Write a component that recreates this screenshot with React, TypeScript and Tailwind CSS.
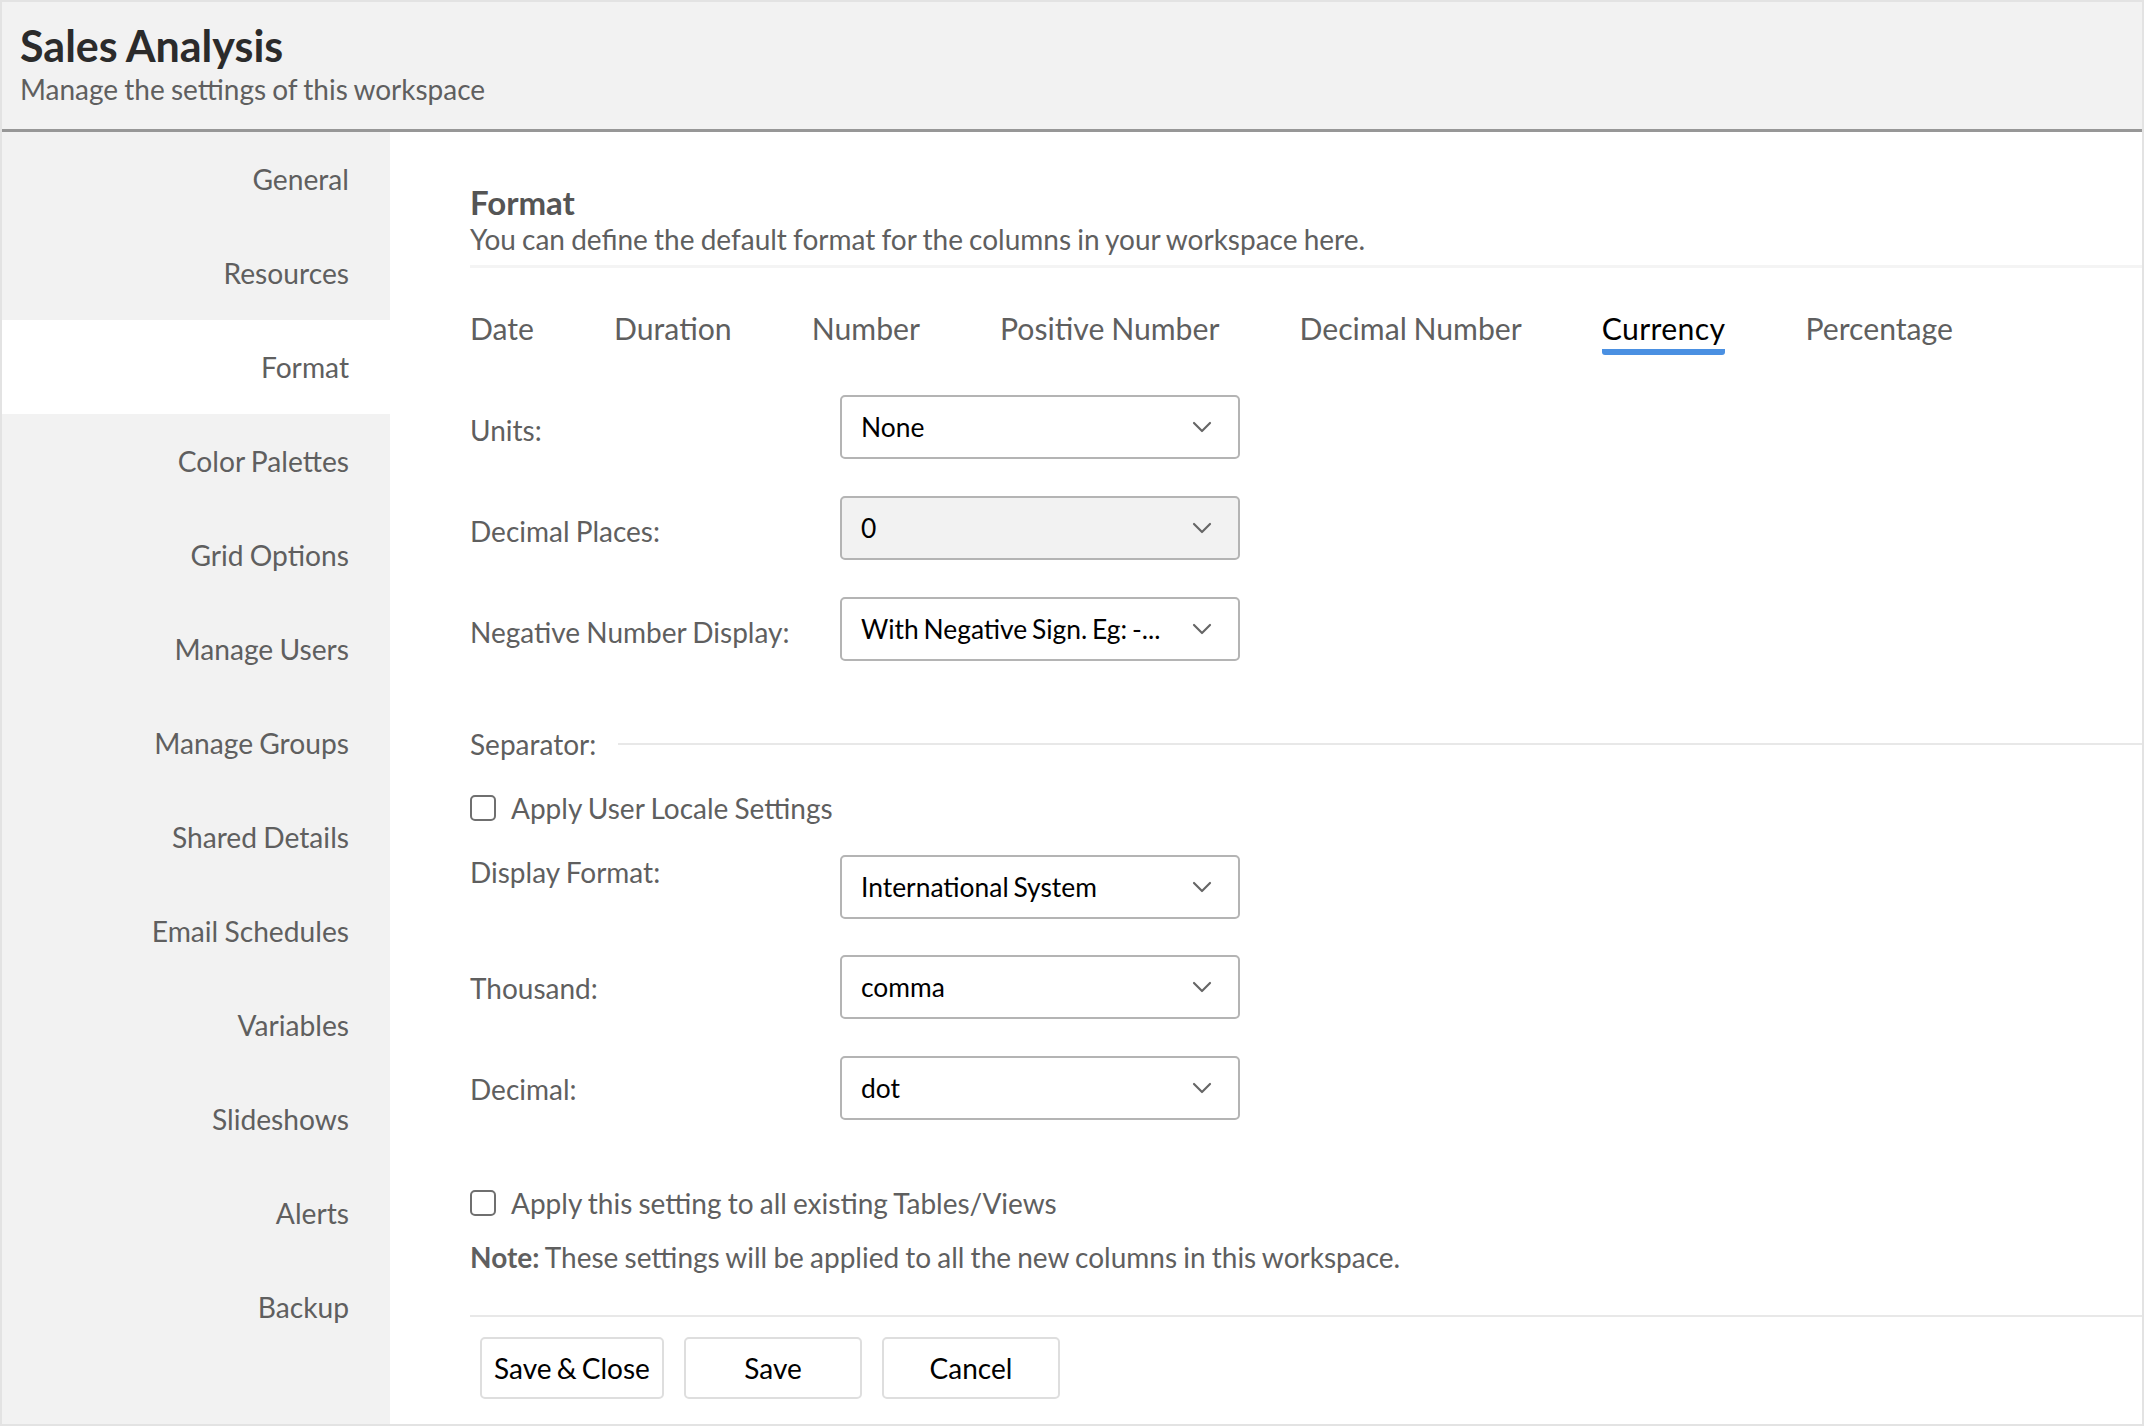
import { ChevronDown } from "lucide-react";

const navItems = [
  "General",
  "Resources",
  "Format",
  "Color Palettes",
  "Grid Options",
  "Manage Users",
  "Manage Groups",
  "Shared Details",
  "Email Schedules",
  "Variables",
  "Slideshows",
  "Alerts",
  "Backup",
];

const tabs = ["Date", "Duration", "Number", "Positive Number", "Decimal Number", "Currency", "Percentage"];

const SelectRow = ({
  label,
  value,
  disabled,
  className = "",
  labelClass = "pt-[17px]",
}: {
  label: string;
  value: string;
  disabled?: boolean;
  className?: string;
  labelClass?: string;
}) => (
  <div className={`flex ${className}`}>
    <div className={`w-[370px] leading-[36px] ${labelClass}`}>{label}</div>
    <div
      className={`w-[400px] h-[64px] border-2 border-[#b4b4b4] rounded-[5px] pl-[19px] pr-[20px] flex items-center justify-between text-black text-[26.4px] [word-spacing:-2px] ${
        disabled ? "bg-[#f2f2f2]" : "bg-white"
      }`}
    >
      <span className="whitespace-nowrap pt-[1px]">{value}</span>
      <ChevronDown size={32} strokeWidth={1.6} className="text-[#666666] shrink-0" />
    </div>
  </div>
);

const Checkbox = ({ label, className = "" }: { label: string; className?: string }) => (
  <div className={`flex items-center h-[36px] ${className}`}>
    <div className="w-[26px] h-[26px] border-2 border-[#6f6f6f] rounded-[5px] mr-[15px]" />
    <span>{label}</span>
  </div>
);

const Button = ({ label, width }: { label: string; width: string }) => (
  <button className={`h-[62px] ${width} border-2 border-[#dedede] rounded-[5px] bg-white text-black [word-spacing:-2px]`}>
    {label}
  </button>
);

export default function App() {
  return (
    <div className="h-screen border-2 border-[#e3e3e3] flex flex-col font-['Lato',sans-serif] text-[28px] [word-spacing:-1px] text-[#5f5f5f] overflow-hidden">
      <header className="h-[130px] shrink-0 bg-[#f2f2f2] border-b-[3px] border-[#979797] pl-[18px] pt-[18px]">
        <h1 className="text-[43px] leading-[51px] font-bold text-[#2b2b2b]">Sales Analysis</h1>
        <p className="leading-[36px]">Manage the settings of this workspace</p>
      </header>

      <div className="flex flex-1">
        <nav className="w-[388px] shrink-0 bg-[#f2f2f2] text-[28.2px]">
          {navItems.map((item) => (
            <div
              key={item}
              className={`h-[94px] flex items-center justify-end pr-[41px] ${item === "Format" ? "bg-white" : ""}`}
            >
              {item}
            </div>
          ))}
        </nav>

        <main className="flex-1 pl-[80px] pt-[51px]">
          <h2 className="text-[33px] leading-[38px] font-bold text-[#555555]">Format</h2>
          <p className="leading-[36px]">You can define the default format for the columns in your workspace here.</p>
          <div className="h-[3px] mt-[8px] bg-[#f4f4f4]" />

          <div className="flex gap-[80px] mt-[42px] text-[30.2px]">
            {tabs.map((tab) => (
              <div
                key={tab}
                className={`leading-[36px] pb-[3px] h-[45px] border-b-[6px] ${
                  tab === "Currency"
                    ? "text-black border-[#4a90e2] rounded-[3px] tracking-[0.35px]"
                    : "border-transparent"
                }`}
              >
                {tab}
              </div>
            ))}
          </div>

          <SelectRow className="mt-[40px]" label="Units:" value="None" />
          <SelectRow className="mt-[37px]" label="Decimal Places:" value="0" disabled />
          <SelectRow className="mt-[37px]" label="Negative Number Display:" value="With Negative Sign. Eg: -..." />

          <div className="flex items-center mt-[65px]">
            <span className="leading-[36px]">Separator:</span>
            <div className="flex-1 h-[2px] ml-[22px] bg-[#e8e8e8]" />
          </div>

          <Checkbox className="mt-[28px]" label="Apply User Locale Settings" />

          <SelectRow className="mt-[29px]" labelClass="-mt-[1px]" label="Display Format:" value="International System" />
          <SelectRow className="mt-[36px]" labelClass="pt-[15px]" label="Thousand:" value="comma" />
          <SelectRow className="mt-[37px]" labelClass="pt-[15px]" label="Decimal:" value="dot" />

          <Checkbox className="mt-[65px]" label="Apply this setting to all existing Tables/Views" />

          <p className="leading-[36px] mt-[18px]">
            <strong className="font-bold">Note:</strong> These settings will be applied to all the new columns in this
            workspace.
          </p>

          <div className="h-[2px] mt-[40px] bg-[#e8e8e8]" />

          <div className="flex gap-[20px] mt-[20px] ml-[10px]">
            <Button label="Save & Close" width="w-[184px]" />
            <Button label="Save" width="w-[178px]" />
            <Button label="Cancel" width="w-[178px]" />
          </div>
        </main>
      </div>
    </div>
  );
}
